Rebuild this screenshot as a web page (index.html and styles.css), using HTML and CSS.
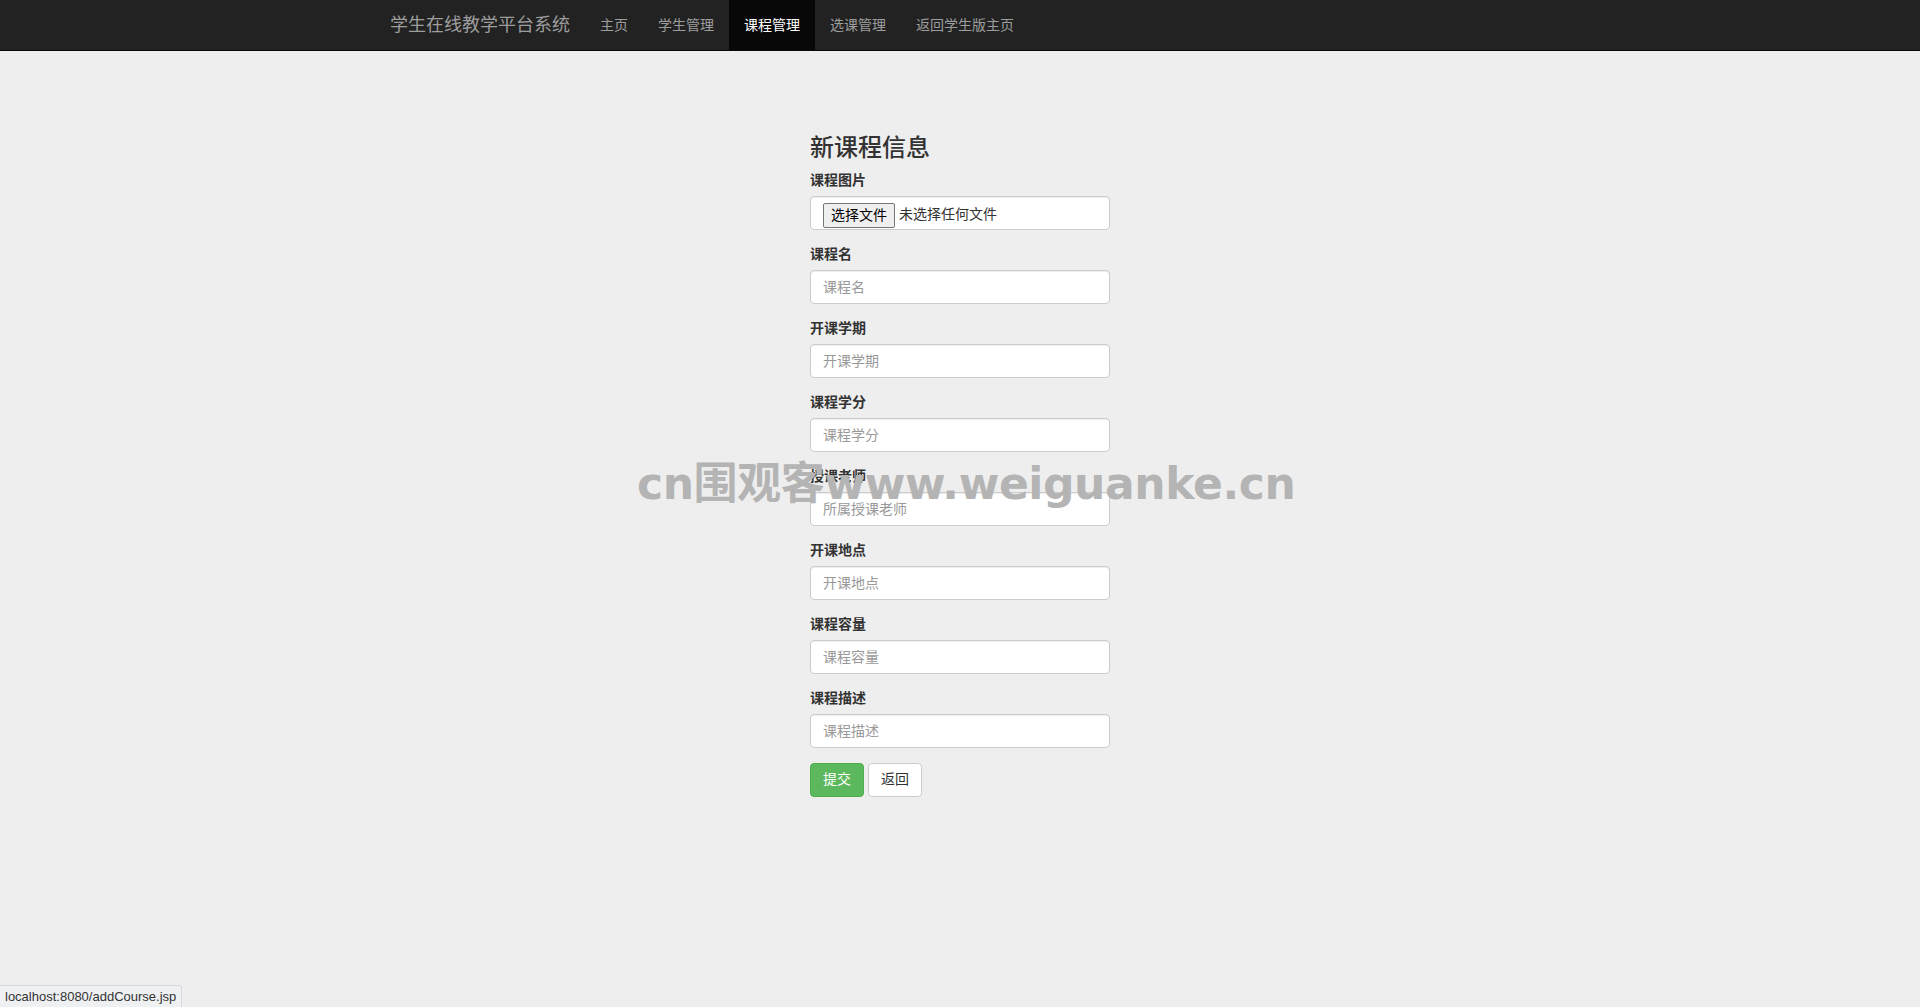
FILE: index.html
```html
<!DOCTYPE html>
<html lang="zh-CN">
<head>
    <meta charset="UTF-8">
    <meta name="viewport" content="width=device-width, initial-scale=1.0">
    <title>添加课程</title>
    <link rel="stylesheet" href="styles.css">
</head>
<body>
    <nav class="navbar">
        <div class="container nav-inner">
            <a class="brand" href="#">学生在线教学平台系统</a>
            <ul class="nav">
                <li><a href="#">主页</a></li>
                <li><a href="#">学生管理</a></li>
                <li class="active"><a href="#">课程管理</a></li>
                <li><a href="#">选课管理</a></li>
                <li><a href="#">返回学生版主页</a></li>
            </ul>
        </div>
    </nav>

    <main class="page">
        <form class="course-form">
            <h3>新课程信息</h3>

            <div class="form-group">
                <label>课程图片</label>
                <label class="form-control file-box">
                    <input type="file" class="file-hidden">
                    <span class="file-btn">选择文件</span>
                    <span class="file-name">未选择任何文件</span>
                </label>
            </div>

            <div class="form-group">
                <label for="name">课程名</label>
                <input type="text" class="form-control" id="name" placeholder="课程名">
            </div>

            <div class="form-group">
                <label for="term">开课学期</label>
                <input type="text" class="form-control" id="term" placeholder="开课学期">
            </div>

            <div class="form-group">
                <label for="credit">课程学分</label>
                <input type="text" class="form-control" id="credit" placeholder="课程学分">
            </div>

            <div class="form-group">
                <label for="teacher">授课老师</label>
                <input type="text" class="form-control" id="teacher" placeholder="所属授课老师">
            </div>

            <div class="form-group">
                <label for="place">开课地点</label>
                <input type="text" class="form-control" id="place" placeholder="开课地点">
            </div>

            <div class="form-group">
                <label for="capacity">课程容量</label>
                <input type="text" class="form-control" id="capacity" placeholder="课程容量">
            </div>

            <div class="form-group">
                <label for="desc">课程描述</label>
                <input type="text" class="form-control" id="desc" placeholder="课程描述">
            </div>

            <button type="submit" class="btn btn-success">提交</button>
            <a href="#" class="btn btn-default">返回</a>
        </form>
    </main>

    <div class="watermark">cn围观客www.weiguanke.cn</div>
    <div class="status-bar">localhost:8080/addCourse.jsp</div>
</body>
</html>
```

FILE: styles.css
```css
* {
    box-sizing: border-box;
}

body {
    margin: 0;
    font-family: "Liberation Sans", "Noto Sans CJK SC", sans-serif;
    font-size: 14px;
    line-height: 1.42857;
    color: #333;
    background-color: #eee;
}

a {
    text-decoration: none;
}

.container {
    width: 1170px;
    margin: 0 auto;
    padding: 0 15px;
}

/* Top navigation */
.navbar {
    background-color: #222;
    border-bottom: 1px solid #080808;
    min-height: 50px;
}

.nav-inner {
    display: flex;
    align-items: stretch;
}

.brand {
    margin-left: -15px;
    padding: 15px;
    font-size: 18px;
    line-height: 20px;
    height: 50px;
    color: #9d9d9d;
}

.nav {
    display: flex;
    list-style: none;
    margin: 0;
    padding: 0;
}

.nav a {
    display: block;
    padding: 15px;
    line-height: 20px;
    color: #9d9d9d;
}

.nav .active a {
    color: #fff;
    background-color: #080808;
}

/* Form */
.page {
    width: 300px;
    margin: 0 auto;
    padding-top: 84px;
}

.course-form h3 {
    margin: 0 0 10px;
    font-size: 24px;
    font-weight: 500;
    line-height: 1.1;
}

.form-group {
    margin-bottom: 15px;
}

.form-group > label:first-child {
    display: block;
    margin-bottom: 5px;
    font-weight: bold;
}

.form-control {
    display: block;
    width: 100%;
    height: 34px;
    padding: 6px 12px;
    font-family: inherit;
    font-size: 14px;
    line-height: 1.42857;
    color: #555;
    background-color: #fff;
    border: 1px solid #ccc;
    border-radius: 4px;
    box-shadow: inset 0 1px 1px rgba(0, 0, 0, 0.075);
}

.form-control::placeholder {
    color: #999;
}

.file-box {
    display: flex;
    align-items: center;
    gap: 4px;
    padding: 4px 0 0 12px;
    cursor: pointer;
}

.file-hidden {
    display: none;
}

.file-btn {
    padding: 1px 7px;
    height: 25px;
    line-height: 21px;
    color: #000;
    background-color: #efefef;
    border: 1px solid #767676;
    border-radius: 2px;
}

.file-name {
    color: #333;
}

.btn {
    display: inline-block;
    height: 34px;
    padding: 6px 12px;
    font-family: inherit;
    font-size: 14px;
    line-height: 1.42857;
    border: 1px solid transparent;
    border-radius: 4px;
    vertical-align: middle;
    cursor: pointer;
}

.btn-success {
    color: #fff;
    background-color: #5cb85c;
    border-color: #4cae4c;
}

.btn-default {
    color: #333;
    background-color: #fff;
    border-color: #ccc;
}

/* Overlays */
.watermark {
    position: absolute;
    top: 458px;
    left: 637px;
    font-family: "DejaVu Sans", "Noto Sans CJK SC", sans-serif;
    font-size: 44px;
    font-weight: bold;
    letter-spacing: -0.4px;
    line-height: 1.2;
    color: #b4b4b4;
    white-space: nowrap;
    pointer-events: none;
}

.status-bar {
    position: fixed;
    left: 0;
    bottom: 0;
    padding: 2px 5px;
    font-size: 13px;
    line-height: 17px;
    color: #333;
    background-color: #eff0f2;
    border: 1px solid #d6d8dc;
    border-left: 0;
    border-bottom: 0;
    border-top-right-radius: 3px;
}
```
